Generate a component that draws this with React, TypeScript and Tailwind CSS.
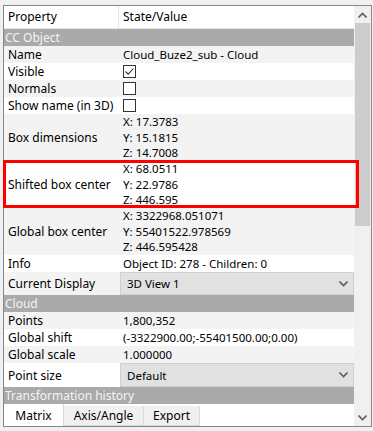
const font = { fontFamily: '"Noto Sans", "Open Sans", sans-serif' };

type Row =
  | { kind: "band"; label: string }
  | { kind: "text"; label: string; value: string; alt: boolean }
  | { kind: "multi"; label: string; lines: string[]; alt: boolean; mark?: boolean }
  | { kind: "check"; label: string; checked: boolean; alt: boolean }
  | { kind: "combo"; label: string; value: string; alt: boolean };

const rows: Row[] = [
  { kind: "band", label: "CC Object" },
  { kind: "text", label: "Name", value: "Cloud_Buze2_sub - Cloud", alt: true },
  { kind: "check", label: "Visible", checked: true, alt: false },
  { kind: "check", label: "Normals", checked: false, alt: true },
  { kind: "check", label: "Show name (in 3D)", checked: false, alt: false },
  { kind: "multi", label: "Box dimensions", lines: ["X: 17.3783", "Y: 15.1815", "Z: 14.7008"], alt: true },
  { kind: "multi", label: "Shifted box center", lines: ["X: 68.0511", "Y: 22.9786", "Z: 446.595"], alt: false, mark: true },
  { kind: "multi", label: "Global box center", lines: ["X: 3322968.051071", "Y: 55401522.978569", "Z: 446.595428"], alt: true },
  { kind: "text", label: "Info", value: "Object ID: 278 - Children: 0", alt: false },
  { kind: "combo", label: "Current Display", value: "3D View 1", alt: true },
  { kind: "band", label: "Cloud" },
  { kind: "text", label: "Points", value: "1,800,352", alt: true },
  { kind: "text", label: "Global shift", value: "(-3322900.00;-55401500.00;0.00)", alt: false },
  { kind: "text", label: "Global scale", value: "1.000000", alt: true },
  { kind: "combo", label: "Point size", value: "Default", alt: false },
  { kind: "band", label: "Transformation history" },
];

function Chevron({ up = false }: { up?: boolean }) {
  return (
    <svg width="9" height="6" viewBox="0 0 9 6">
      <path
        d={up ? "M0.5 5.5 L4.5 1.5 L8.5 5.5" : "M0.5 0.5 L4.5 4.5 L8.5 0.5"}
        fill="none"
        stroke="#606060"
        strokeWidth="1.6"
      />
    </svg>
  );
}

function Check({ checked }: { checked: boolean }) {
  return (
    <div className="flex h-[13px] w-[13px] items-center justify-center border border-[#333333] bg-white">
      {checked && (
        <svg width="11" height="11" viewBox="0 0 11 11">
          <path d="M1.5 5.5 L4.2 8.2 L9.5 2.5" fill="none" stroke="#333333" strokeWidth="1.1" />
        </svg>
      )}
    </div>
  );
}

function PropRow({ row }: { row: Row }) {
  if (row.kind === "band") {
    return (
      <div className="flex h-[17px] items-center bg-[#aaaaaa] pl-[1px] text-[#f4f4f4]">
        {row.label}
      </div>
    );
  }
  const bg = row.alt ? "bg-[#f3f3f3]" : "bg-white";
  if (row.kind === "combo") {
    return (
      <div className={`flex h-[24px] ${bg}`}>
        <div className="flex w-[116px] shrink-0 items-center pl-[4px]">{row.label}</div>
        <div className="flex flex-1 items-center justify-between border border-[#d0d0d0] bg-[#e1e1e1] pr-[5px] pl-[6px] text-[11.5px]">
          <span>{row.value}</span>
          <Chevron />
        </div>
      </div>
    );
  }
  if (row.kind === "multi") {
    return (
      <div className={`relative flex h-[47px] ${bg}`}>
        <div className="flex w-[116px] shrink-0 items-center pl-[4px]">{row.label}</div>
        <div className="flex flex-col justify-center pt-[1px] pl-[3px] text-[11.5px] leading-[15.5px]">
          {row.lines.map((l) => (
            <span key={l}>{l}</span>
          ))}
        </div>
        {row.mark && (
          <div className="pointer-events-none absolute top-[-1px] right-[-5px] bottom-0 left-[-1px] border-[3px] border-[#ff0000]" />
        )}
      </div>
    );
  }
  return (
    <div className={`flex h-[17px] items-center ${bg}`}>
      <div className="w-[116px] shrink-0 pl-[4px]">{row.label}</div>
      <div className="pl-[3px] text-[11.5px]">
        {row.kind === "check" ? <Check checked={row.checked} /> : row.value}
      </div>
    </div>
  );
}

export default function App() {
  return (
    <div
      className="h-[431px] w-[373px] bg-[#f0f0f0] pt-[5px] pl-[3px] text-[12px] leading-[15px] text-black"
      style={font}
    >
      <div className="flex h-[422px] w-[369px] border border-[#828790] bg-white">
        <div className="flex w-[350px] flex-col">
          <div className="flex h-[23px] items-center border-b border-[#e5e5e5]">
            <div className="flex h-full w-[115px] items-center border-r border-[#e5e5e5] pl-[4px]">Property</div>
            <div className="pl-[4px]">State/Value</div>
          </div>
          {rows.map((r) => (
            <PropRow key={r.label} row={r} />
          ))}
          <div className="flex h-[22px] items-end">
            <div className="flex h-[22px] w-[60px] items-center justify-center border-r border-[#d9d9d9] bg-white">
              Matrix
            </div>
            <div className="flex h-[20px] w-[80px] items-center justify-center border-r border-b border-[#d9d9d9] bg-[#f0f0f0]">
              Axis/Angle
            </div>
            <div className="flex h-[20px] w-[56px] items-center justify-center border-r border-b border-[#d9d9d9] bg-[#f0f0f0]">
              Export
            </div>
          </div>
        </div>
        <div className="flex w-[17px] flex-col bg-[#f0f0f0]">
          <div className="flex h-[17px] items-center justify-center">
            <Chevron up />
          </div>
          <div className="mx-[1px] h-[203px] bg-[#cdcdcd]" />
          <div className="flex-1" />
          <div className="flex h-[17px] items-center justify-center">
            <Chevron />
          </div>
        </div>
      </div>
    </div>
  );
}
